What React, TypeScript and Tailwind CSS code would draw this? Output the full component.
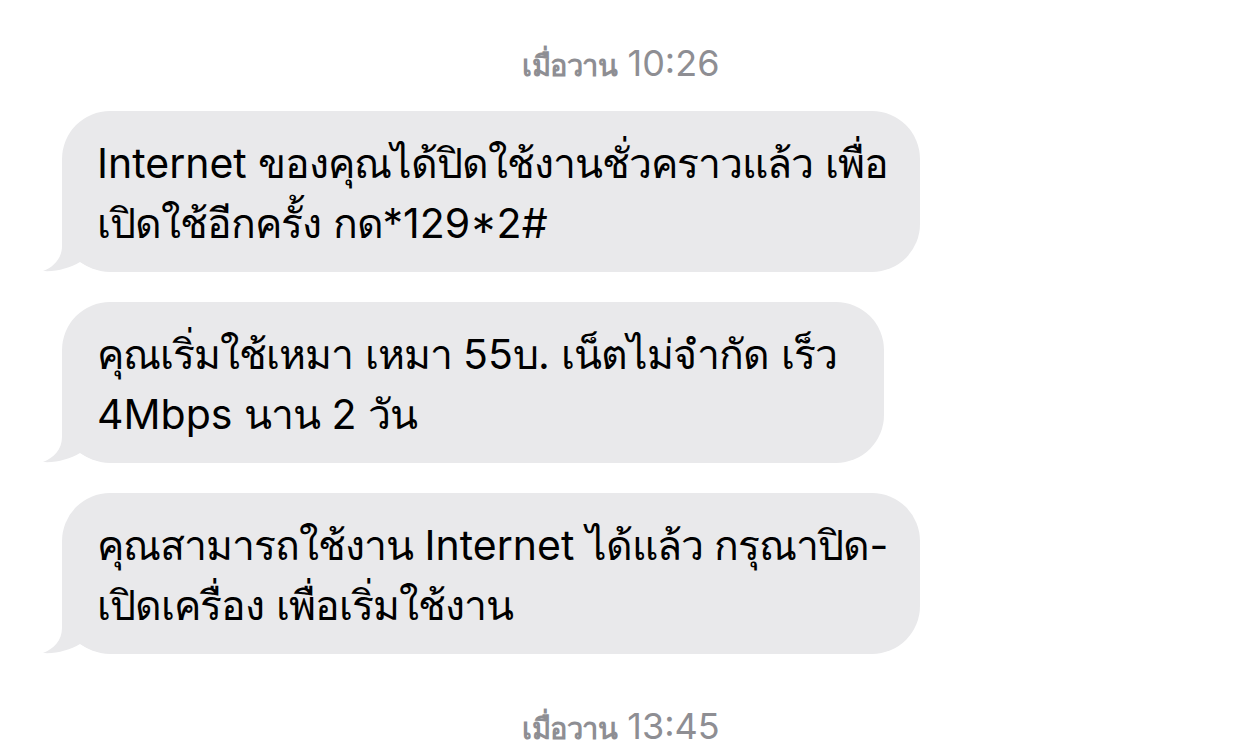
import React from 'react';

type Msg = { lines: string[]; width: string };

const messages: Msg[] = [
  {
    lines: ['Internet ของคุณได้ปิดใช้งานชั่วคราวแล้ว เพื่อ', 'เปิดใช้อีกครั้ง กด*129*2#'],
    width: 'w-[858px]',
  },
  {
    lines: ['คุณเริ่มใช้เหมา เหมา 55บ. เน็ตไม่จำกัด เร็ว', '4Mbps นาน 2 วัน'],
    width: 'w-[822px]',
  },
  {
    lines: ['คุณสามารถใช้งาน Internet ได้แล้ว กรุณาปิด-', 'เปิดเครื่อง เพื่อเริ่มใช้งาน'],
    width: 'w-[858px]',
  },
];

// the Thai fallback font runs wider than the phone's, so tighten only the Thai runs
const splitThai = (s: string) =>
  s.split(/([\u0E00-\u0E7F]+)/).map((part, i) =>
    /[\u0E00-\u0E7F]/.test(part) ? (
      <span key={i} className="tracking-[-1px]">
        {part}
      </span>
    ) : (
      <span key={i}>{part}</span>
    )
  );

const Tail = () => (
  <svg
    className="absolute left-[-22px] bottom-0"
    width="72"
    height="52"
    viewBox="0 0 72 52"
  >
    <path
      d="M22 0 L22 26 C22 38 14 47 3 51 C16 52 30 48 40 42 C48 47 58 51 72 51 L72 0 Z"
      fill="#e9e9eb"
    />
  </svg>
);

const Bubble = ({ msg }: { msg: Msg }) => (
  <div className={`relative ml-[62px] ${msg.width} rounded-[48px] bg-[#e9e9eb] px-[35px] pt-[22px] pb-[19px]`}>
    <Tail />
    <div className="relative text-[41px] leading-[60px] text-black whitespace-nowrap">
      {msg.lines.map((l, i) => (
        <div key={i}>{splitThai(l)}</div>
      ))}
    </div>
  </div>
);

const Stamp = ({ time, className }: { time: string; className: string }) => (
  <div className={`flex items-baseline justify-center gap-[10px] h-[40px] leading-[40px] text-[#8e8e93] ${className}`}>
    <span className="text-[29px] leading-[40px] font-semibold tracking-[-0.5px]">เมื่อวาน</span>
    <span className="text-[36px] leading-[40px]">{time}</span>
  </div>
);

export default function App() {
  return (
    <div className="w-[1242px] h-[748px] overflow-hidden bg-white font-['Inter','Noto_Sans','DejaVu_Sans',sans-serif]">
      <Stamp time="10:26" className="mt-[43px]" />
      <div className="mt-[28px] flex flex-col gap-[30px]">
        {messages.map((m, i) => (
          <Bubble key={i} msg={m} />
        ))}
      </div>
      <Stamp time="13:45" className="mt-[52px]" />
    </div>
  );
}
